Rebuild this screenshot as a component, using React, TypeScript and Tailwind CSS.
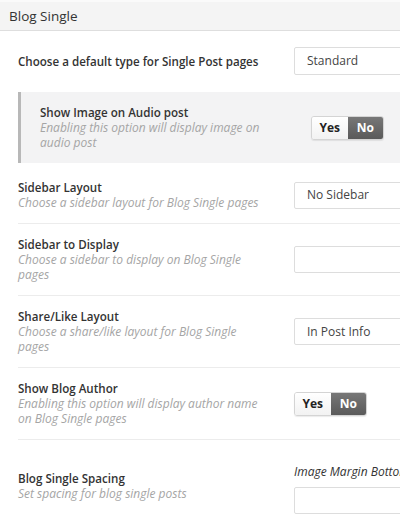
import React from 'react';

type RowProps = {
  title: string;
  desc?: string;
  children?: React.ReactNode;
};

function Title({ children }: { children: React.ReactNode }) {
  return <div className="text-[11.6px] leading-[15px] font-semibold text-[#333]">{children}</div>;
}

function Desc({ children }: { children: React.ReactNode }) {
  return <div className="text-[12px] leading-[15px] italic text-[#a5a5a5]">{children}</div>;
}

function SelectBox({ value }: { value?: string }) {
  return (
    <div className="h-[27px] w-[160px] shrink-0 border border-[#dddddd] rounded-[2px] bg-white flex items-center pl-[12px] text-[12px] text-[#444]">
      {value}
    </div>
  );
}

function Toggle() {
  return (
    <div className="flex h-[24px] w-[73px] shrink-0 rounded-[3px] overflow-hidden border border-[#d4d4d4] shadow-[0_1px_1px_rgba(0,0,0,0.08)]">
      <div className="flex-1 flex items-center justify-center bg-gradient-to-b from-white to-[#f2f2f2] text-[12px] font-bold text-[#222]">
        Yes
      </div>
      <div className="flex-1 flex items-center justify-center bg-gradient-to-b from-[#777] to-[#5a5a5a] text-[12px] font-bold text-white">
        No
      </div>
    </div>
  );
}

function Row({ title, desc, children }: RowProps) {
  return (
    <div className="flex items-center py-[13px] border-b border-[#ececec]">
      <div className="w-[276px] shrink-0">
        <div className="w-[245px]">
          <Title>{title}</Title>
          {desc && <Desc>{desc}</Desc>}
        </div>
      </div>
      {children}
    </div>
  );
}

export default function App() {
  return (
    <div className="w-[400px] h-[526px] overflow-hidden bg-white font-['Open_Sans','Liberation_Sans',sans-serif]">
      <div className="h-[31px] bg-[#f4f4f4] border-t-2 border-t-[#fafafa] border-b border-b-[#dedede] flex items-center pl-[9px] text-[13.5px] text-[#333]">
        Blog Single
      </div>

      <div className="pl-[18px]">
        <div className="flex items-center mt-[16px] h-[28px]">
          <div className="w-[276px] shrink-0">
            <Title>Choose a default type for Single Post pages</Title>
          </div>
          <div className="h-[28px] w-[160px] shrink-0 border border-[#dddddd] rounded-[2px] bg-white flex items-center pl-[12px] text-[12px] text-[#444]">
            Standard
          </div>
        </div>

        <div className="mt-[17px] flex items-center bg-[#f3f3f4] border-l-[3px] border-[#b8b8b8] py-[13px] pl-[19px]">
          <div className="w-[271px] shrink-0">
            <div className="w-[226px]">
              <Title>Show Image on Audio post</Title>
              <Desc>Enabling this option will display image on audio post</Desc>
            </div>
          </div>
          <Toggle />
        </div>

        <div className="mt-[4px]">
          <Row title="Sidebar Layout" desc="Choose a sidebar layout for Blog Single pages">
            <SelectBox value="No Sidebar" />
          </Row>
          <Row title="Sidebar to Display" desc="Choose a sidebar to display on Blog Single pages">
            <SelectBox />
          </Row>
          <Row title="Share/Like Layout" desc="Choose a share/like layout for Blog Single pages">
            <SelectBox value="In Post Info" />
          </Row>
          <Row title="Show Blog Author" desc="Enabling this option will display author name on Blog Single pages">
            <Toggle />
          </Row>

          <div className="flex items-start pt-[24px]">
            <div className="w-[276px] shrink-0 mt-[7px]">
              <Title>Blog Single Spacing</Title>
              <Desc>Set spacing for blog single posts</Desc>
            </div>
            <div className="shrink-0">
              <div className="text-[12px] leading-[15px] italic text-[#333] whitespace-nowrap">Image Margin Bottom</div>
              <div className="mt-[8px]">
                <SelectBox />
              </div>
            </div>
          </div>
        </div>
      </div>
    </div>
  );
}
